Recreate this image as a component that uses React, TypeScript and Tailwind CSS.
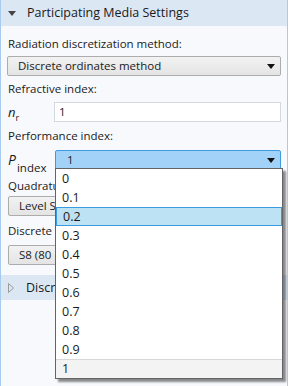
const options = ['0', '0.1', '0.2', '0.3', '0.4', '0.5', '0.6', '0.7', '0.8', '0.9', '1'];

function Caret() {
	return (
		<svg width="8" height="5" viewBox="0 0 8 5" className="shrink-0">
			<path d="M0 0 H8 L4 5 Z" fill="#111" />
		</svg>
	);
}

function GreyButton({ label, width }: { label: string; width: string }) {
	return (
		<div
			className={`h-[20px] ${width} ml-[7px] flex items-center pl-[10px] rounded-[2px] border border-[#acacac] bg-gradient-to-b from-[#f2f2f2] to-[#e4e4e4] text-[#1a1a1a] whitespace-nowrap overflow-hidden`}
		>
			{label}
		</div>
	);
}

export default function App() {
	return (
		<div className="relative w-[288px] h-[386px] overflow-hidden bg-[#f7f9fd] border-x border-[#a6cbef] text-[11.5px] leading-[18px] text-[#1a1a1a] font-['Segoe_UI','Open_Sans',sans-serif]">
			{/* Section header */}
			<div className="h-[26px] -mx-px flex items-center bg-[#dce7f4]">
				<svg width="8" height="5" viewBox="0 0 8 5" className="ml-[8px]">
					<path d="M0 0 H8 L4 5 Z" fill="#444" />
				</svg>
				<span className="ml-[11px] text-[12.5px]">Participating Media Settings</span>
			</div>

			<div className="mt-[9px] ml-[7px]">Radiation discretization method:</div>
			<div className="mt-[3px] mx-[6px] h-[20px] flex items-center justify-between pl-[10px] pr-[5px] rounded-[2px] border border-[#acacac] bg-gradient-to-b from-[#f2f2f2] to-[#e4e4e4]">
				<span>Discrete ordinates method</span>
				<Caret />
			</div>

			<div className="mt-[4px] ml-[7px]">Refractive index:</div>
			<div className="mt-[4px] flex items-center h-[20px]">
				<span className="w-[53px] shrink-0 pl-[7px] italic text-[13px] whitespace-nowrap">
					n<sub className="not-italic text-[9px] align-[-2px]">r</sub>
				</span>
				<div className="flex-1 mr-[6px] h-[20px] flex items-center pl-[4px] bg-white border border-[#d4d9df]">1</div>
			</div>

			<div className="mt-[5px] ml-[7px]">Performance index:</div>
			<div className="mt-[5px] flex items-center h-[20px]">
				<span className="w-[54px] shrink-0 pl-[7px] italic text-[14px] whitespace-nowrap">
					P<sub className="not-italic text-[11.5px] align-[-4px] ml-[1px]">index</sub>
				</span>
				<div className="flex-1 mr-[6px] h-[20px] flex items-center justify-between pl-[11px] pr-[5px] rounded-[2px] bg-[#a3d2f8] border border-[#3e9be2]">
					<span>1</span>
					<Caret />
				</div>
			</div>

			<div className="mt-[7px] ml-[7px]">Quadrature set:</div>
			<div className="mt-[1px]">
				<GreyButton label="Level Symmetric" width="w-[120px]" />
			</div>

			<div className="mt-[6px] ml-[7px]">Discrete ordinates:</div>
			<div className="mt-[5px]">
				<GreyButton label="S8 (80 directions)" width="w-[120px]" />
			</div>

			{/* Collapsed section */}
			<div className="mt-[10px] -mx-px h-[25px] flex items-center bg-[#dce7f4]">
				<svg width="6" height="10" viewBox="0 0 6 10" className="ml-[8px]">
					<path d="M0.5 0.5 L5.5 5 L0.5 9.5 Z" fill="none" stroke="#9a9a9a" />
				</svg>
				<span className="ml-[12px] text-[12.5px]">Discrete Ordinates Settings</span>
			</div>

			{/* Open dropdown list */}
			<div className="absolute left-[54px] top-[168px] w-[228px] bg-white border border-[#646464] shadow-[3px_3px_2px_rgba(0,0,0,0.45)]">
				{options.map((o, i) => (
					<div
						key={o}
						className={`h-[19px] flex items-center pl-[6px] text-[12.5px] ${
							i === 2
								? 'bg-[#bde2f4] border border-[#3a9be0] pl-[5px]'
								: i === options.length - 1
									? 'bg-[#f3f3f3] border-t border-[#d8d8d8]'
									: ''
						}`}
					>
						{o}
					</div>
				))}
			</div>
		</div>
	);
}
